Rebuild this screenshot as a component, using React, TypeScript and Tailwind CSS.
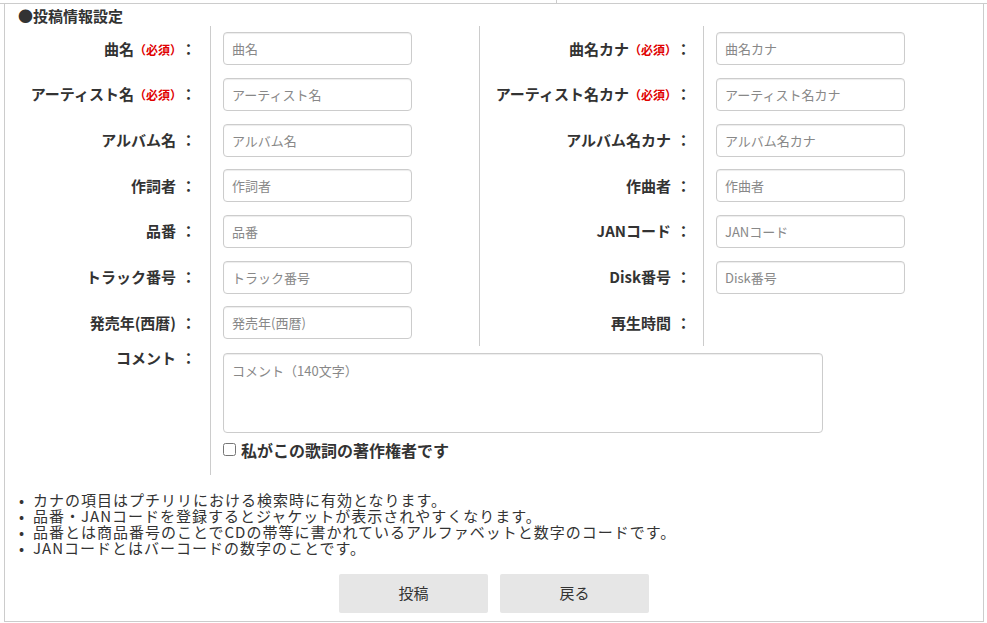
import React from 'react';

type Field = {
  label: string;
  placeholder?: string;
  required?: boolean;
};

const rows: [Field, Field][] = [
  [{ label: '曲名', placeholder: '曲名', required: true }, { label: '曲名カナ', placeholder: '曲名カナ', required: true }],
  [{ label: 'アーティスト名', placeholder: 'アーティスト名', required: true }, { label: 'アーティスト名カナ', placeholder: 'アーティスト名カナ', required: true }],
  [{ label: 'アルバム名', placeholder: 'アルバム名' }, { label: 'アルバム名カナ', placeholder: 'アルバム名カナ' }],
  [{ label: '作詞者', placeholder: '作詞者' }, { label: '作曲者', placeholder: '作曲者' }],
  [{ label: '品番', placeholder: '品番' }, { label: 'JANコード', placeholder: 'JANコード' }],
  [{ label: 'トラック番号', placeholder: 'トラック番号' }, { label: 'Disk番号', placeholder: 'Disk番号' }],
  [{ label: '発売年(西暦)', placeholder: '発売年(西暦)' }, { label: '再生時間' }],
];

const notes = [
  'カナの項目はプチリリにおける検索時に有効となります。',
  '品番・JANコードを登録するとジャケットが表示されやすくなります。',
  '品番とは商品番号のことでCDの帯等に書かれているアルファベットと数字のコードです。',
  'JANコードとはバーコードの数字のことです。',
];

const font = { fontFamily: '"Noto Sans CJK JP", "Noto Sans", sans-serif' };

function Label({ field, pr }: { field: Field; pr: string }) {
  return (
    <div className={`h-[45.67px] flex items-center justify-end border-r border-[#ccc] ${pr}`}>
      <span className="text-[15px] font-bold text-[#333] whitespace-nowrap">
        {field.label}
        {field.required && <span className="text-[12px] text-[#e00000]">（必須）</span>}
        <span className="ml-[5px]">：</span>
      </span>
    </div>
  );
}

function Input({ field }: { field: Field }) {
  return (
    <div className="h-[45.67px] flex items-center pl-[12px]">
      {field.placeholder && (
        <input
          type="text"
          placeholder={field.placeholder}
          className="w-[189px] h-[33px] px-[8px] text-[13px] text-[#333] placeholder:text-[#888] border border-[#ccc] rounded-[4px] shadow-[inset_0_1px_1px_rgba(0,0,0,0.075)] outline-none"
        />
      )}
    </div>
  );
}

export default function App() {
  return (
    <div className="bg-white w-[987px] h-[623px] overflow-hidden" style={font}>
      {/* tab strip edge */}
      <div className="h-[3px] flex">
        <div className="w-[557px] border-r border-[#ccc]" />
      </div>
      <div className="border-t border-[#ccc]" />

      <div className="ml-[4px] w-[980px] border-x border-b border-[#ccc] pb-[8px]">
        <div className="h-[22px] pl-[13px] pt-[3px] text-[15px] leading-[18px] font-bold text-[#333]">●投稿情報設定</div>

        <div className="grid grid-cols-[206px_269px_224px_1fr]">
          {rows.map(([l, r], i) => (
            <React.Fragment key={i}>
              <Label field={l} pr="pr-[14px]" />
              <div className="border-r border-[#ccc]">
                <Input field={l} />
              </div>
              <Label field={r} pr="pr-[12px]" />
              <Input field={r} />
            </React.Fragment>
          ))}

          {/* comment row */}
          <div className="border-r border-[#ccc] pt-[1px] pr-[14px] flex justify-end items-start">
            <span className="text-[15px] font-bold text-[#333]">
              コメント<span className="ml-[5px]">：</span>
            </span>
          </div>
          <div className="col-span-3 pl-[12px] pt-[7px] pb-[15px]">
            <textarea
              placeholder="コメント（140文字）"
              className="block w-[600px] h-[80px] px-[8px] pt-[7px] text-[13px] text-[#333] placeholder:text-[#888] border border-[#ccc] rounded-[4px] shadow-[inset_0_1px_1px_rgba(0,0,0,0.075)] outline-none resize-none"
            />
            <label className="mt-[7px] flex items-center gap-[5px]">
              <input type="checkbox" className="w-[13px] h-[13px] m-0" />
              <span className="text-[16px] leading-[20px] font-bold text-[#333]">私がこの歌詞の著作権者です</span>
            </label>
          </div>
        </div>

        <ul className="mt-[17px] pl-[14px] text-[15px] tracking-[1px] leading-[16px] text-[#333]">
          {notes.map((n) => (
            <li key={n} className="flex">
              <span className="w-[14px]">•</span>
              <span>{n}</span>
            </li>
          ))}
        </ul>

        <div className="mt-[18px] flex justify-center gap-[12px]">
          <button className="w-[149px] h-[39px] bg-[#e6e6e6] rounded-[2px] text-[15px] text-[#333]">投稿</button>
          <button className="w-[149px] h-[39px] bg-[#e6e6e6] rounded-[2px] text-[15px] text-[#333]">戻る</button>
        </div>
      </div>
    </div>
  );
}
